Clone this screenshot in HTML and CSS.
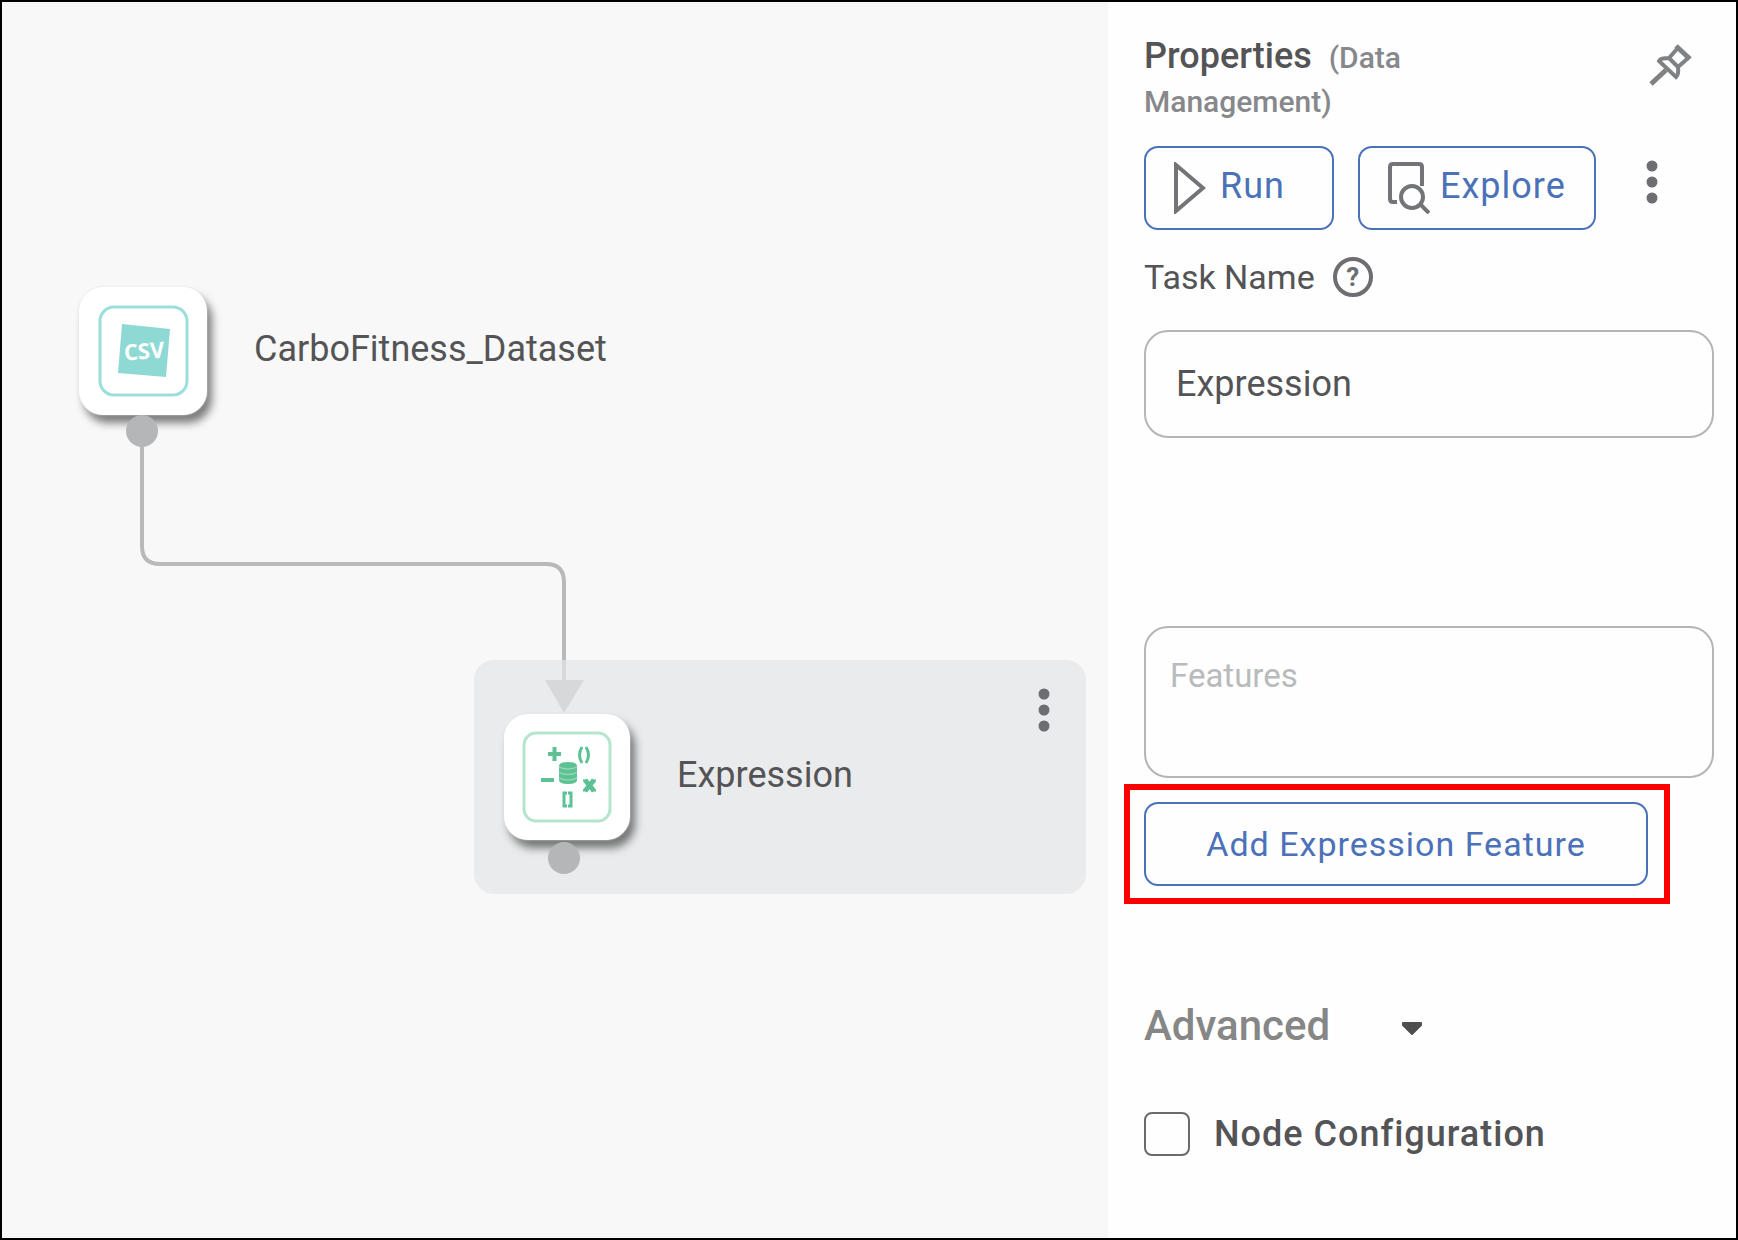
FILE: index.html
```html
<!DOCTYPE html>
<html lang="en">
  <head>
    <title>Workflow - Expression</title>
    <meta charset="UTF-8" />
    <link rel="stylesheet" href="styles.css">
  </head>
  <body>
    <div class="wrapper">
      <main class="canvas">
        <svg class="links" width="700" height="760" aria-hidden="true">
          <path d="M140 429 V544 Q140 562 158 562 H544 Q562 562 562 580 V682" />
          <polygon points="543,678 582,678 562,711" />
        </svg>

        <div class="node dataset">
          <div class="tile">
            <svg class="tile-icon" width="92" height="94" viewBox="0 0 92 94" aria-hidden="true">
              <rect x="3" y="3" width="87" height="88" rx="14" fill="none" stroke="#9adfdc" stroke-width="3" />
              <polygon points="25,20 73,25 69,73 21,69" fill="#8fd9d5" />
              <text class="csv" x="47" y="55" transform="rotate(-4 47 47)">CSV</text>
            </svg>
          </div>
          <span class="node-label">CarboFitness_Dataset</span>
          <span class="port"></span>
        </div>

        <div class="node expression">
          <div class="tile">
            <svg class="tile-icon" width="92" height="94" viewBox="0 0 92 94" aria-hidden="true">
              <rect x="3" y="3" width="86" height="88" rx="12" fill="none" stroke="#b5e4cf" stroke-width="3" />
              <g fill="none" stroke="#5cc294" stroke-width="4">
                <path d="M27 24 H40 M33.500 17 V31" />
                <path d="M20 50 H33" />
                <path d="M61 17 Q56 25 61 33 M65 17 Q70 25 65 33" stroke-width="3" />
                <path d="M64 50 L73 61 M73 50 L64 61" stroke-width="5" />
                <path d="M62 50.500 H67 M70 50.500 H75 M62 60.500 H67 M70 60.500 H75" stroke-width="2" />
                <path d="M46 63 H43 V76 H46 M47 63 H50 V76 H47" stroke-width="3" />
              </g>
              <path d="M38 36 Q38 32 47 32 Q56 32 56 36 V50 Q56 54 47 54 Q38 54 38 50 Z" fill="#5cc294" />
              <path d="M38 37 Q47 41 56 37 M38 42.500 Q47 46.500 56 42.500 M38 48 Q47 52 56 48" fill="none" stroke="#90d6b6" stroke-width="1.500" />
            </svg>
          </div>
          <span class="node-label">Expression</span>
          <span class="port"></span>
          <button type="button" class="dots" aria-label="Node menu">
            <svg width="12" height="44" viewBox="0 0 12 44"><circle cx="6" cy="6" r="5.500" /><circle cx="6" cy="22" r="5.500" /><circle cx="6" cy="38" r="5.500" /></svg>
          </button>
        </div>
      </main>

      <aside class="properties">
        <header>
          <h1>Properties <small>(Data Management)</small></h1>
          <button type="button" class="pin" aria-label="Pin panel">
            <svg width="44" height="46" viewBox="0 0 44 46">
              <path d="M29 6 L21 15 Q12 15 11 18 L28 34 Q31 31 30 24 L39 16 M21 15 L30 24" />
              <path d="M28 3 L42 16 M3 41 L18 27" class="thick" />
            </svg>
          </button>
        </header>

        <div class="actions">
          <button type="button" class="btn run">
            <svg width="34" height="52" viewBox="0 0 34 52"><path d="M4 3 V49 L31 26 Z" /></svg>
            <span>Run</span>
          </button>
          <button type="button" class="btn explore">
            <svg width="44" height="52" viewBox="0 0 44 52">
              <path d="M11 40 H7 Q4 40 4 37 V5 Q4 2 7 2 H33 Q36 2 36 5 V24" />
              <circle cx="26" cy="35" r="11" />
              <path d="M34 42 L43 51" />
            </svg>
            <span>Explore</span>
          </button>
          <button type="button" class="dots" aria-label="More actions">
            <svg width="12" height="44" viewBox="0 0 12 44"><circle cx="6" cy="6" r="5.500" /><circle cx="6" cy="22" r="5.500" /><circle cx="6" cy="38" r="5.500" /></svg>
          </button>
        </div>

        <div class="field-name">
          <label for="taskName">Task Name</label>
          <button type="button" class="help" aria-label="Help">?</button>
        </div>
        <input type="text" id="taskName" class="box" value="Expression">

        <textarea id="features" class="box features" placeholder="Features" aria-label="Features"></textarea>

        <div class="highlight">
          <button type="button" class="btn add">Add Expression Feature</button>
        </div>

        <button type="button" class="advanced">
          Advanced
          <svg width="24" height="18" viewBox="0 0 24 18"><path d="M3 4 H21 V6 L12 15 L3 6 Z" /></svg>
        </button>

        <div class="config">
          <input type="checkbox" id="nodeConfig">
          <label for="nodeConfig">Node Configuration</label>
        </div>
      </aside>
    </div>
  </body>
</html>
```
FILE: styles.css
```css
* {
  box-sizing: border-box;
}
body {
  margin: 0;
  font-family: Roboto, "Liberation Sans", sans-serif;
  font-size: 36px;
  color: #545456;
}
button,
input,
textarea {
  font: inherit;
  color: inherit;
  margin: 0;
}
button {
  background: none;
  border: 0;
  padding: 0;
  cursor: pointer;
}
svg {
  display: block;
  flex: none;
}
.wrapper {
  display: flex;
  min-height: 100vh;
  border: 2px solid #000;
}

/* workflow canvas */
.canvas {
  position: relative;
  flex: 1;
  background: #f8f8f8;
}
.links {
  position: absolute;
  left: 0;
  top: 0;
}
.links path {
  fill: none;
  stroke: #b8b9bb;
  stroke-width: 4;
}
.links polygon {
  fill: #b8b9bb;
}
.node {
  position: absolute;
  display: flex;
  align-items: center;
}
.dataset {
  left: 77px;
  top: 285px;
}
.expression {
  left: 472px;
  top: 658px;
  width: 612px;
  height: 234px;
  padding-left: 30px;
  border-radius: 20px;
  background: rgba(228, 229, 231, 0.7);
}
.tile {
  display: flex;
  align-items: center;
  justify-content: center;
  width: 128px;
  height: 128px;
  border-radius: 24px;
  background: #fff;
  box-shadow: 0 0 2px #dfe3e1, 5px 8px 8px rgba(0, 0, 0, 0.5);
}
.expression .tile {
  width: 126px;
  height: 126px;
}
.csv {
  font-family: "Open Sans", sans-serif;
  font-size: 22px;
  font-weight: 700;
  text-anchor: middle;
  fill: #fff;
}
.node-label {
  margin-left: 47px;
  padding-bottom: 4px;
}
.port {
  position: absolute;
  left: 47px;
  top: 128px;
  width: 32px;
  height: 32px;
  border-radius: 50%;
  background: #b4b6b8;
}
.expression .port {
  left: 74px;
  top: 182px;
}
.dots {
  fill: #6d6e71;
}
.expression .dots {
  position: absolute;
  right: 36px;
  top: 28px;
}

/* properties panel */
.properties {
  width: 628px;
  padding: 33px 22px 32px 36px;
  background: #fefefe;
}
header {
  display: flex;
  justify-content: space-between;
  align-items: flex-start;
}
h1 {
  width: 320px;
  margin: 0;
  font-size: 36px;
  line-height: 42px;
  font-weight: 500;
}
h1 small {
  margin-left: 8px;
  font-size: 30px;
  color: #87888b;
}
.pin {
  margin: 8px 22px 0 0;
}
.pin path {
  fill: none;
  stroke: #808184;
  stroke-width: 4;
}
.pin .thick {
  stroke-width: 5;
}
.actions {
  display: flex;
  align-items: center;
  gap: 24px;
  margin-top: 23px;
}
.btn {
  display: flex;
  align-items: center;
  height: 84px;
  border: 2px solid #4b72b9;
  border-radius: 14px;
  color: #4b72b9;
  letter-spacing: 1px;
  padding: 0 26px;
}
.btn svg {
  fill: none;
  stroke: #737477;
  stroke-width: 4;
}
.btn span {
  padding-bottom: 4px;
}
.run {
  width: 190px;
  gap: 14px;
}
.explore {
  width: 238px;
  gap: 10px;
}
.actions .dots {
  margin: 0 0 12px 26px;
}
.field-name {
  display: flex;
  align-items: center;
  gap: 18px;
  margin-top: 27px;
  font-size: 34px;
  line-height: 40px;
}
.help {
  width: 40px;
  height: 40px;
  border: 4px solid #6d6e71;
  border-radius: 50%;
  color: #6d6e71;
  font-size: 26px;
  font-weight: 700;
  line-height: 32px;
}
.box {
  display: block;
  width: 100%;
  height: 108px;
  margin-top: 33px;
  padding: 0 30px;
  border: 2px solid #b5b5b5;
  border-radius: 24px;
  background: #fefefe;
}
.features {
  height: 152px;
  margin-top: 188px;
  padding: 28px 24px;
  font-size: 33px;
  line-height: 40px;
  resize: none;
}
.features::placeholder {
  color: #b9babb;
}
.highlight {
  width: 546px;
  margin: 6px 0 0 -20px;
  padding: 12px 16px 12px 14px;
  border: 6px solid #f00;
}
.add {
  width: 100%;
  justify-content: center;
  font-size: 34px;
}
.advanced {
  display: flex;
  align-items: center;
  gap: 70px;
  margin-top: 97px;
  font-size: 42px;
  line-height: 50px;
  font-weight: 500;
  color: #868686;
}
.advanced svg {
  margin-top: 4px;
}
.advanced path {
  fill: #4f4f51;
  stroke: #4f4f51;
  stroke-width: 2;
  stroke-linejoin: round;
}
.config {
  display: flex;
  align-items: center;
  gap: 24px;
  margin-top: 61px;
  font-weight: 500;
  letter-spacing: 1px;
}
.config input {
  appearance: none;
  width: 46px;
  height: 44px;
  border: 2px solid #6a6a6c;
  border-radius: 8px;
  background: #fefefe;
}
.config input:checked {
  background: #4b72b9;
}
```
